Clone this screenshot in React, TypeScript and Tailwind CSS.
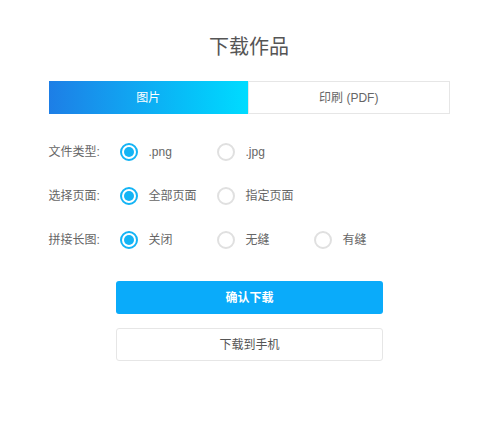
import { useState } from "react";

const font = {
  fontFamily: '"Liberation Sans", Arial, "Noto Sans CJK SC", sans-serif',
};

type Opt = { value: string; label: string };

const rows: { key: string; title: string; options: Opt[] }[] = [
  {
    key: "type",
    title: "文件类型:",
    options: [
      { value: "png", label: ".png" },
      { value: "jpg", label: ".jpg" },
    ],
  },
  {
    key: "page",
    title: "选择页面:",
    options: [
      { value: "all", label: "全部页面" },
      { value: "custom", label: "指定页面" },
    ],
  },
  {
    key: "long",
    title: "拼接长图:",
    options: [
      { value: "off", label: "关闭" },
      { value: "seamless", label: "无缝" },
      { value: "seam", label: "有缝" },
    ],
  },
];

const Radio = ({ checked }: { checked: boolean }) =>
  checked ? (
    <span className="flex h-[18px] w-[18px] shrink-0 items-center justify-center rounded-full border-2 border-[#14b4f5] bg-white">
      <span className="h-[10px] w-[10px] rounded-full bg-[#14b4f5]" />
    </span>
  ) : (
    <span className="h-[18px] w-[18px] shrink-0 rounded-full border-2 border-[#e0e0e0] bg-white" />
  );

const App = () => {
  const [tab, setTab] = useState<"img" | "pdf">("img");
  const [values, setValues] = useState<Record<string, string>>({
    type: "png",
    page: "all",
    long: "off",
  });

  return (
    <div className="min-h-screen bg-white" style={font}>
      <div className="mx-auto w-[401px] pt-[33px] translate-x-[-1px]">
        <h1 className="text-center text-[20px] leading-[28px] text-[#555]">
          下载作品
        </h1>

        <div className="mt-[20px] flex h-[33px] text-[12px]">
          <button
            type="button"
            onClick={() => setTab("img")}
            className={
              tab === "img"
                ? "flex-1 bg-gradient-to-r from-[#1d7ee6] to-[#00dcff] text-white"
                : "flex-1 border border-[#e6e6e6] bg-white text-[#666]"
            }
          >
            图片
          </button>
          <button
            type="button"
            onClick={() => setTab("pdf")}
            className={
              tab === "pdf"
                ? "flex-1 bg-gradient-to-r from-[#1d7ee6] to-[#00dcff] text-white"
                : "flex-1 border border-[#e6e6e6] bg-white text-[#666]"
            }
          >
            印刷 (PDF)
          </button>
        </div>

        <div className="mt-[28px] flex flex-col gap-[24px] text-[12px] text-[#666]">
          {rows.map((row) => (
            <div key={row.key} className="flex h-[20px] items-center">
              <span className="w-[71px] shrink-0">{row.title}</span>
              {row.options.map((opt) => (
                <button
                  key={opt.value}
                  type="button"
                  onClick={() => setValues({ ...values, [row.key]: opt.value })}
                  className="flex w-[97px] items-center gap-[11px]"
                >
                  <Radio checked={values[row.key] === opt.value} />
                  <span>{opt.label}</span>
                </button>
              ))}
            </div>
          ))}
        </div>

        <div className="mt-[31px] flex flex-col items-center gap-[14px] pl-[1px]">
          <button
            type="button"
            className="h-[33px] w-[267px] rounded-[3px] bg-[#0aabfa] text-[12px] font-bold text-white"
          >
            确认下载
          </button>
          <button
            type="button"
            className="h-[33px] w-[267px] rounded-[3px] border border-[#e6e6e6] bg-white text-[12px] text-[#555]"
          >
            下载到手机
          </button>
        </div>
      </div>
    </div>
  );
};

export default App;
